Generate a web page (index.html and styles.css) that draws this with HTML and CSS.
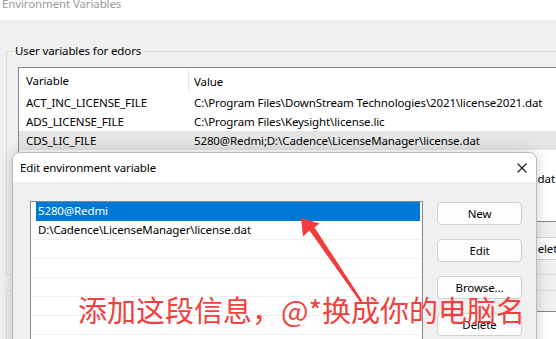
FILE: index.html
```html
<!DOCTYPE html>
<html>
<head>
<meta charset="utf-8">
<link rel="stylesheet" href="styles.css">
</head>
<body>
<div class="bgwin">
  <div class="bg-title"><span class="bg-title-text">Environment Variables</span></div>
  <div class="bg-body">
    <div class="group">
      <div class="group-label">User variables for edors</div>
      <div class="lv">
        <div class="lv-head"><div class="c1">Variable</div><div class="c2 hsep">Value</div></div>
        <div class="lv-row"><div class="c1">ACT_INC_LICENSE_FILE</div><div class="c2">C:\Program Files\DownStream Technologies\2021\license2021.dat</div></div>
        <div class="lv-row"><div class="c1">ADS_LICENSE_FILE</div><div class="c2">C:\Program Files\Keysight\license.lic</div></div>
        <div class="lv-row sel"><div class="c1">CDS_LIC_FILE</div><div class="c2">5280@Redmi;D:\Cadence\LicenseManager\license.dat</div></div>
        <div class="lv-row"><div class="c1">OneDrive</div><div class="c2">C:\Users\edors\OneDrive</div></div>
        <div class="lv-row"><div class="c1">MGLS_LICENSE_FILE</div><div class="c2">D:\Program Files\DownStream Technologies\2021\license2021_1.dat</div></div>
        <div class="lv-row"><div class="c1">Path</div><div class="c2">C:\Users\edors\AppData\Local\Microsoft\WindowsApps;</div></div>
      </div>
      <div class="bg-btns"><div class="btn bgbtn">New...</div><div class="btn bgbtn">Edit...</div><div class="btn bgbtn">Delete</div></div>
    </div>
    <div class="group g2">
      <div class="group-label">System variables</div>
      <div class="lv lv2"></div>
    </div>
  </div>
</div>

<div class="dialog">
  <div class="dlg-title">
    <span>Edit environment variable</span>
    <svg class="close" width="10" height="10" viewBox="0 0 10 10"><path d="M0.5 0.5 L9.5 9.5 M9.5 0.5 L0.5 9.5" stroke="#1a1a1a" stroke-width="1.1" fill="none"/></svg>
  </div>
  <div class="dlg-body">
    <div class="dlg-list">
      <div class="item sel">5280@Redmi</div>
      <div class="item">D:\Cadence\LicenseManager\license.dat</div>
      <div class="item"></div>
      <div class="item"></div>
      <div class="item"></div>
      <div class="item"></div>
      <div class="item"></div>
      <div class="item"></div>
    </div>
    <div class="dlg-btns">
      <div class="btn">New</div>
      <div class="btn">Edit</div>
      <div class="btn">Browse...</div>
      <div class="btn">Delete</div>
    </div>
  </div>
</div>

<svg class="arrow" width="556" height="339" viewBox="0 0 556 339">
  <polygon points="301,218 319.5,223.5 314.5,227.5 362.5,301 360.5,302.5 309.5,230.5 303,236.5" fill="#f23b3b"/>
</svg>
<div class="note">添加这段信息，@*换成你的电脑名</div>
</body>
</html>
```
FILE: styles.css
```css
html, body {
  margin: 0;
  padding: 0;
}
body {
  width: 556px;
  height: 339px;
  overflow: hidden;
  position: relative;
  background: #f0f0f0;
  font-family: "Noto Sans", "Liberation Sans", sans-serif;
  font-size: 11.5px;
  letter-spacing: -0.12px;
  color: #000;
}
.bgwin {
  width: 640px;
}
.bg-title {
  height: 20px;
  background: #fff;
  overflow: hidden;
}
.bg-title-text {
  display: block;
  margin-top: -4px;
  padding-left: 2px;
  line-height: 16px;
  color: #9a9a9a;
}
.bg-body {
  padding: 31px 0 0 6px;
}
.group {
  border: 1px solid #dcdcdc;
  border-right: none;
  padding-bottom: 14px;
}
.group-label {
  width: max-content;
  margin: -9px 0 0 6px;
  padding: 0 2px;
  line-height: 16px;
  background: #f0f0f0;
}
.lv {
  margin: 8px 0 0 11px;
  height: 153px;
  border: 1px solid #828790;
  border-right: none;
  background: #fff;
}
.lv-head, .lv-row {
  display: flex;
  white-space: nowrap;
}
.lv-head {
  height: 25px;
  align-items: center;
}
.lv-row {
  height: 19px;
  align-items: center;
}
.lv-row.sel {
  background: #e5e5e5;
}
.c1 {
  width: 162px;
  padding-left: 7px;
}
.c2 {
  padding-left: 6px;
}
.hsep {
  align-self: stretch;
  display: flex;
  align-items: center;
  border-left: 1px solid #e5e5e5;
  margin: 2px 0 1px;
  padding-left: 5px;
}
.bg-btns {
  display: flex;
  gap: 8px;
  margin: 15px 0 0 336px;
}
.btn {
  height: 23px;
  box-sizing: border-box;
  border: 1px solid #d0d0d0;
  border-radius: 4px;
  background: #fdfdfd;
  display: flex;
  align-items: center;
  justify-content: center;
}
.bgbtn {
  width: 75px;
}
.g2 {
  margin-top: 15px;
  height: 80px;
}
.lv2 {
  margin-top: 13px;
}

.dialog {
  position: absolute;
  left: 12px;
  top: 152px;
  width: 525px;
  height: 230px;
  box-sizing: border-box;
  border: 1px solid #b9b9b9;
  border-radius: 8px 8px 0 0;
  background: #f0f0f0;
  box-shadow: 0 0 14px rgba(0, 0, 0, 0.2);
  overflow: hidden;
}
.dlg-title {
  height: 29px;
  background: #fff;
  display: flex;
  align-items: center;
  justify-content: space-between;
  padding: 0 9px 0 7px;
}
.dlg-body {
  display: flex;
  gap: 14px;
  padding: 19px 14px 0 17px;
}
.dlg-list {
  width: 393px;
  height: 170px;
  box-sizing: border-box;
  border: 1px solid #828790;
  background: #fff;
  padding: 0 2px;
}
.item {
  height: 18px;
  line-height: 18px;
  border-bottom: 1px solid #f0f0f0;
  padding-left: 5px;
  white-space: nowrap;
}
.item.sel {
  margin-left: 3px;
  padding-left: 2px;
  background: #0078d7;
  border-bottom-color: #0078d7;
  color: #fff;
}
.dlg-btns {
  width: 85px;
  display: flex;
  flex-direction: column;
  gap: 14px;
  padding-top: 1px;
}

.arrow {
  position: absolute;
  left: 0;
  top: 0;
}
.note {
  position: absolute;
  left: 78px;
  top: 295px;
  font-family: "Noto Sans CJK SC", sans-serif;
  font-size: 29px;
  line-height: 29px;
  letter-spacing: 0;
  color: #f43f3f;
  white-space: nowrap;
}
```
